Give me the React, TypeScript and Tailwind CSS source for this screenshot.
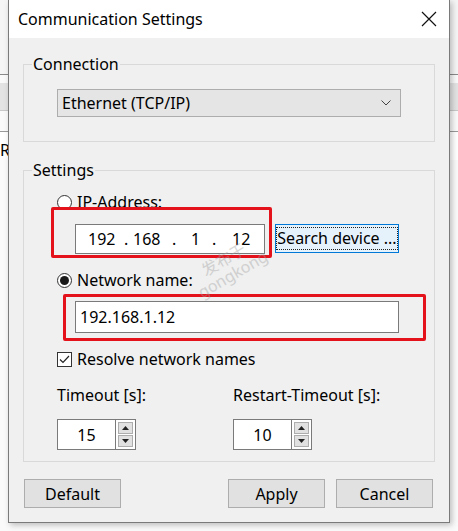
import React from "react";

const font = { fontFamily: '"Noto Sans", "Open Sans", sans-serif' };

function Radio({ checked }: { checked?: boolean }) {
  return (
    <span className="flex h-[15px] w-[15px] items-center justify-center rounded-full border border-[#333] bg-white">
      {checked && <span className="h-[9px] w-[9px] rounded-full bg-[#1a1a1a]" />}
    </span>
  );
}

function Spinner({ value }: { value: string }) {
  return (
    <div className="flex h-[31px]">
      <div className="flex w-[59px] items-center justify-center border border-[#7a7a7a] bg-white text-[16px] text-black">
        {value}
      </div>
      <div className="flex w-[20px] flex-col border border-l-0 border-[#7a7a7a] bg-white p-[2px] gap-[1px]">
        <div className="flex flex-1 items-center justify-center border border-[#adadad] bg-[#e1e1e1]">
          <svg width="7" height="4" viewBox="0 0 7 4">
            <path d="M0 4 L3.5 0 L7 4 Z" fill="#222" />
          </svg>
        </div>
        <div className="flex flex-1 items-center justify-center border border-[#adadad] bg-[#e1e1e1]">
          <svg width="7" height="4" viewBox="0 0 7 4">
            <path d="M0 0 L3.5 4 L7 0 Z" fill="#222" />
          </svg>
        </div>
      </div>
    </div>
  );
}

function Button({ label, className }: { label: string; className?: string }) {
  return (
    <div
      className={
        "flex h-[29px] w-[97px] items-center justify-center border border-[#adadad] bg-[#e1e1e1] text-[16px] text-black " +
        (className ?? "")
      }
    >
      {label}
    </div>
  );
}

export default function App() {
  return (
    <div className="relative h-[531px] w-[458px] overflow-hidden bg-white" style={font}>
      {/* background window behind the dialog */}
      <div className="flex h-full flex-col">
        <div className="h-[74px] bg-[#f5f5f5]" />
        <div className="h-px bg-[#8a8a8a]" />
        <div className="h-[8px] bg-[#fafafa]" />
        <div className="h-[27px] bg-[#e3e3e3]" />
        <div className="h-px bg-[#c8c8c8]" />
        <div className="h-[20px] bg-[#fafafa]" />
        <div className="h-px bg-[#9a9a9a]" />
        <div className="pl-0 pt-[8px] text-[16px] leading-[20px] text-black">R</div>
        <div className="flex-1 bg-[#fafafa]" />
      </div>

      {/* dialog */}
      <div className="absolute left-[8px] top-0 flex h-[523px] w-[442px] flex-col border border-t-0 border-[#7a7a7a] bg-[#f0f0f0] text-black shadow-[2px_2px_6px_rgba(0,0,0,0.25)]">
        <div className="flex h-[38px] items-center justify-between bg-white pl-[9px] pr-[12px]">
          <span className="text-[16px]">Communication Settings</span>
          <svg width="16" height="16" viewBox="0 0 16 16">
            <path d="M1 1 L15 15 M15 1 L1 15" stroke="#111" strokeWidth="1.2" />
          </svg>
        </div>

        <div className="flex flex-col px-[14px]">
          {/* Connection group */}
          <fieldset className="mt-[15px] h-[89px] border border-[#d9d9d9] pl-[8px] pr-[33px]">
            <legend className="px-[1px] text-[16px] leading-[22px]">Connection</legend>
            <div className="ml-[25px] mt-[14px] flex h-[28px] items-center justify-between border border-[#adadad] bg-[#e5e5e5] pl-[4px] pr-[9px] text-[16px]">
              <span>Ethernet (TCP/IP)</span>
              <svg width="10" height="6" viewBox="0 0 10 6">
                <path d="M0.5 0.5 L5 5 L9.5 0.5" fill="none" stroke="#444" strokeWidth="1" />
              </svg>
            </div>
          </fieldset>

          {/* Settings group */}
          <fieldset className="mt-[17px] h-[303px] border border-[#d9d9d9] pl-[8px] pr-[8px]">
            <legend className="px-[1px] text-[16px] leading-[22px]">Settings</legend>
            <div className="ml-[25px] flex flex-col">
              <div className="mt-[11px] flex h-[20px] items-center gap-[5px] text-[16px]">
                <Radio />
                <span>IP-Address:</span>
              </div>
              <div className="mt-[12px] flex items-start gap-[10px] pl-[18px]">
                <div className="flex h-[30px] w-[190px] items-center border border-[#7a7a7a] bg-white pl-[12px] text-[16px]">
                  <span className="w-[36px]">192</span>
                  <span className="w-[9px]">.</span>
                  <span className="w-[39px]">168</span>
                  <span className="w-[19px]">.</span>
                  <span className="w-[21px]">1</span>
                  <span className="w-[20px]">.</span>
                  <span>12</span>
                </div>
                <div className="flex h-[29px] w-[124px] items-center justify-center border border-[#0078d7] bg-[#e5f1fb] text-[16px]">
                  <span className="border border-dotted border-[#222] px-0 leading-[21px]">Search device ...</span>
                </div>
              </div>

              <div className="mt-[16px] flex h-[20px] items-center gap-[5px] text-[16px]">
                <Radio checked />
                <span>Network name:</span>
              </div>
              <div className="mt-[11px] flex h-[32px] w-[324px] items-center border border-[#7a7a7a] bg-white ml-[18px] pl-[4px] text-[16px]">
                192.168.1.12
              </div>

              <div className="mt-[16px] flex h-[20px] items-center gap-[5px] text-[16px]">
                <span className="flex h-[15px] w-[15px] items-center justify-center border border-[#333] bg-white">
                  <svg width="11" height="9" viewBox="0 0 11 9">
                    <path d="M1 4.5 L4 7.5 L10 1" fill="none" stroke="#222" strokeWidth="1.2" />
                  </svg>
                </span>
                <span>Resolve network names</span>
              </div>

              <div className="mt-[14px] flex text-[16px]">
                <span className="w-[176px]">Timeout [s]:</span>
                <span>Restart-Timeout [s]:</span>
              </div>
              <div className="mt-[12px] flex">
                <div className="w-[176px]">
                  <Spinner value="15" />
                </div>
                <Spinner value="10" />
              </div>
            </div>
          </fieldset>

          <div className="mt-[17px] flex">
            <Button label="Default" className="ml-[1px]" />
            <Button label="Apply" className="ml-[107px]" />
            <Button label="Cancel" className="ml-[11px]" />
          </div>
        </div>
      </div>

      {/* red annotation boxes */}
      <div className="absolute left-[51px] top-[207px] h-[51px] w-[221px] rounded-[2px] border-[3px] border-[#e3121b]" />
      <div className="absolute left-[63px] top-[294px] h-[47px] w-[363px] rounded-[2px] border-[3px] border-[#e3121b]" />

      {/* watermark */}
      <div className="pointer-events-none absolute left-[190px] top-[250px] -rotate-[30deg] text-[16px] leading-[17px] text-[#a0a0a0] opacity-40" style={{ fontFamily: '"Noto Sans", "Noto Sans CJK SC", sans-serif' }}>
        <div className="pl-[14px]">发布于</div>
        <div>gongkong</div>
      </div>
    </div>
  );
}
